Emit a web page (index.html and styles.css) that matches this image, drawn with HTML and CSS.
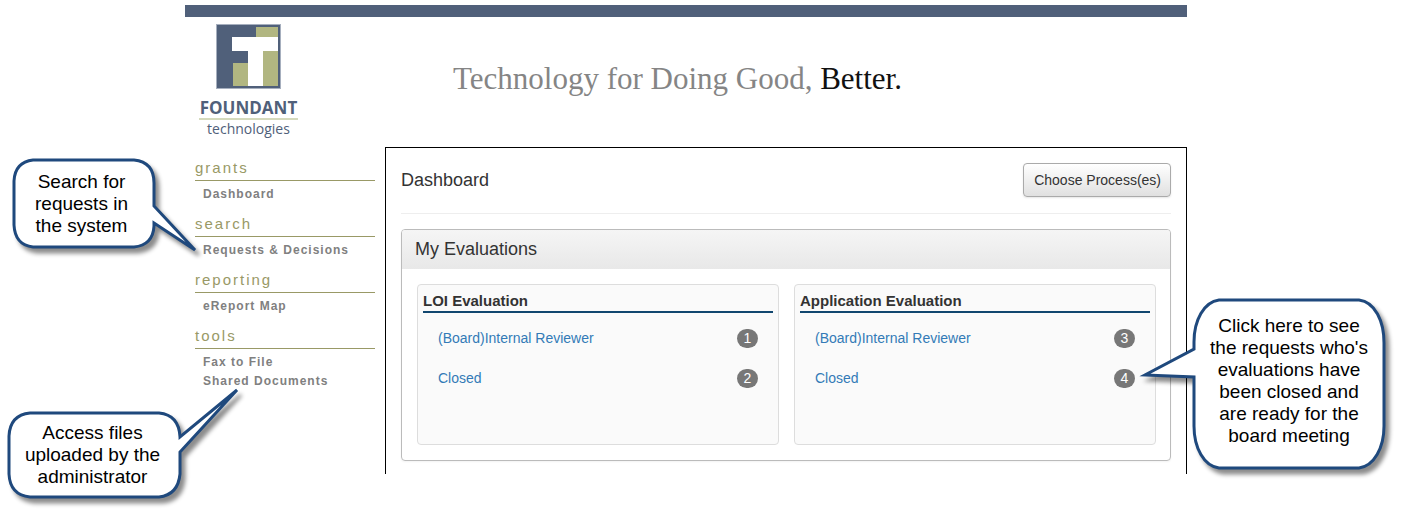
FILE: index.html
```html
<!DOCTYPE html>
<html lang="en">
<head>
<meta charset="utf-8">
<title>Dashboard - Foundant Technologies</title>
<link rel="stylesheet" href="styles.css">
</head>
<body>
<div class="page">
  <header class="header">
    <div class="logo">
      <svg class="logo-mark" viewBox="0 0 65 65" aria-hidden="true">
        <rect width="65" height="65" fill="#a6afbe"/>
        <rect x="1" y="1" width="63" height="63" fill="#50607a"/>
        <path d="M40 3h22v11H40zM47 27h15v35H47zM17 39h15v23H17z" fill="#b1b681"/>
        <path d="M16 13h46v14H47v35H32V27H16z" fill="#fff"/>
      </svg>
      <span class="logo-name">FOUNDANT</span>
      <span class="logo-sub">technologies</span>
    </div>
    <p class="tagline">Technology for Doing Good, <b>Better.</b></p>
  </header>
  <div class="columns">
    <nav class="sidebar">
      <section class="group"><h2>grants</h2><a href="#">Dashboard</a></section>
      <section class="group"><h2>search</h2><a href="#">Requests &amp; Decisions</a></section>
      <section class="group"><h2>reporting</h2><a href="#">eReport Map</a></section>
      <section class="group"><h2>tools</h2><a href="#">Fax to File</a><a href="#">Shared Documents</a></section>
    </nav>
    <main class="main">
      <div class="title-row">
        <h1>Dashboard</h1>
        <button type="button" class="choose">Choose Process(es)</button>
      </div>
      <section class="panel">
        <h2 class="panel-title">My Evaluations</h2>
        <div class="panel-body">
          <section class="card">
            <h3>LOI Evaluation</h3>
            <ul>
              <li><a href="#">(Board)Internal Reviewer</a><span class="badge">1</span></li>
              <li><a href="#">Closed</a><span class="badge">2</span></li>
            </ul>
          </section>
          <section class="card">
            <h3>Application Evaluation</h3>
            <ul>
              <li><a href="#">(Board)Internal Reviewer</a><span class="badge">3</span></li>
              <li><a href="#">Closed</a><span class="badge">4</span></li>
            </ul>
          </section>
        </div>
      </section>
    </main>
  </div>

  <aside class="callout callout-search">
    <svg viewBox="0 0 144 91" aria-hidden="true"><path d="M21 2H122Q142 4 142 25V48L183 92L142 65V68Q141 87 122 89H21Q3 87 2 67V23Q3 4 21 2Z"/></svg>
    <p>Search for<br>requests in<br>the system</p>
  </aside>
  <aside class="callout callout-files">
    <svg viewBox="0 0 175 88" aria-hidden="true"><path d="M23 2H152Q172 4 173 26L230-21L173 41V63Q171 84 152 86H23Q3 84 2 63V25Q3 4 23 2Z"/></svg>
    <p>Access files<br>uploaded by the<br>administrator</p>
  </aside>
  <aside class="callout callout-closed">
    <svg viewBox="0 0 194 172" aria-hidden="true"><path d="M27 2H167C183 4 192 23 192 45V128C192 150 182 168 167 170H27C12 168 2 150 2 128V79L-47 77L2 51V44C2 22 12 4 27 2Z"/></svg>
    <p>Click here to see<br>the requests who's<br>evaluations have<br>been closed and<br>are ready for the<br>board meeting</p>
  </aside>
</div>
</body>
</html>
```

FILE: styles.css
```css
* { box-sizing: border-box; }

body {
  min-height: 100vh;
  margin: 0;
  padding: 5px 230px 44px 185px;
  background: #fff;
  color: #333;
  font: 14px/20px "Liberation Sans", Arial, sans-serif;
}

h1, h2, h3, p, ul { margin: 0; padding: 0; font-weight: normal; }
a { text-decoration: none; }

.page { position: relative; }

.header {
  display: flex;
  height: 142px;
  border-top: 12px solid #50607a;
}

.logo {
  display: flex;
  flex-direction: column;
  align-items: center;
  width: 99px;
  margin-left: 14px;
  padding-top: 7px;
  color: #50607a;
  font-family: "Open Sans", "Noto Sans", sans-serif;
}
.logo-mark { width: 65px; height: 65px; }
.logo-name {
  width: 100%;
  padding-top: 9px;
  border-bottom: 2px solid #d5dabd;
  font-size: 17px;
  font-weight: bold;
  line-height: 20px;
  text-align: center;
}
.logo-sub { font-size: 14px; line-height: 18px; }

.tagline {
  margin-left: 155px;
  padding-top: 42px;
  color: #858585;
  font: 31px/40px "Liberation Serif", "Times New Roman", serif;
}
.tagline b { color: #111; font-weight: normal; }

.columns { display: flex; align-items: flex-start; }

.sidebar { width: 200px; padding: 9px 10px 0; }
.group { margin-bottom: 8px; }
.group h2 {
  margin-bottom: 4px;
  border-bottom: 1px solid #999966;
  color: #999966;
  font-size: 15px;
  line-height: 24px;
  letter-spacing: 2px;
}
.group a {
  display: block;
  padding-left: 8px;
  color: #808080;
  font-size: 12px;
  font-weight: bold;
  line-height: 19px;
  letter-spacing: 1px;
}

.main {
  flex: 1;
  padding: 15px 15px 13px;
  border: 1px solid #000;
  border-bottom: 0;
}

.title-row {
  display: flex;
  align-items: center;
  justify-content: space-between;
  margin-bottom: 15px;
  padding-bottom: 16px;
  border-bottom: 1px solid #eee;
}
.title-row h1 { font-size: 18px; }

.choose {
  height: 34px;
  padding: 0 9px 0 10px;
  border: 1px solid #aaa;
  border-radius: 4px;
  background: linear-gradient(#fff, #e0e0e0);
  box-shadow: 0 1px 2px rgba(0, 0, 0, .1);
  color: #333;
  font: inherit;
}

.panel {
  border: 1px solid #bbb;
  border-radius: 4px;
  box-shadow: 0 1px 2px rgba(0, 0, 0, .05);
}
.panel-title {
  padding: 0 13px;
  border-radius: 3px 3px 0 0;
  background: linear-gradient(#f5f5f5, #e8e8e8);
  font-size: 18px;
  line-height: 39px;
}
.panel-body {
  display: grid;
  grid-template-columns: 1fr 1fr;
  gap: 15px;
  padding: 15px 14px 15px 15px;
}

.card {
  min-height: 161px;
  padding: 5px;
  border: 1px solid #ddd;
  border-radius: 4px;
  background: #fafafa;
}
.card h3 {
  margin-bottom: 5px;
  border-bottom: 2px solid #11476f;
  font-size: 15px;
  font-weight: bold;
  line-height: 21px;
}
.card ul { list-style: none; }
.card li {
  display: flex;
  align-items: center;
  justify-content: space-between;
  height: 40px;
  padding: 0 15px;
}
.card a { color: #337ab7; }
.badge {
  min-width: 21px;
  border-radius: 10px;
  background: #777;
  color: #fff;
  line-height: 19px;
  text-align: center;
}

/* Annotation bubbles laid over the page */
.callout {
  position: absolute;
  display: flex;
  align-items: center;
  justify-content: center;
  color: #000;
  font-size: 19px;
  line-height: 22px;
  text-align: center;
  white-space: nowrap;
}
.callout svg {
  position: absolute;
  inset: 0;
  width: 100%;
  height: 100%;
  overflow: visible;
  fill: #fff;
  stroke: #1f497d;
  stroke-width: 3;
  filter: drop-shadow(4px 5px 2px rgba(0, 0, 0, .45));
}
.callout p { position: relative; }
.callout-search { left: -173px; top: 153px; width: 144px; height: 91px; padding-right: 5px; }
.callout-files { left: -178px; top: 406px; width: 175px; height: 88px; padding-right: 4px; }
.callout-closed { right: -199px; top: 293px; width: 194px; height: 172px; padding-bottom: 6px; }
```
